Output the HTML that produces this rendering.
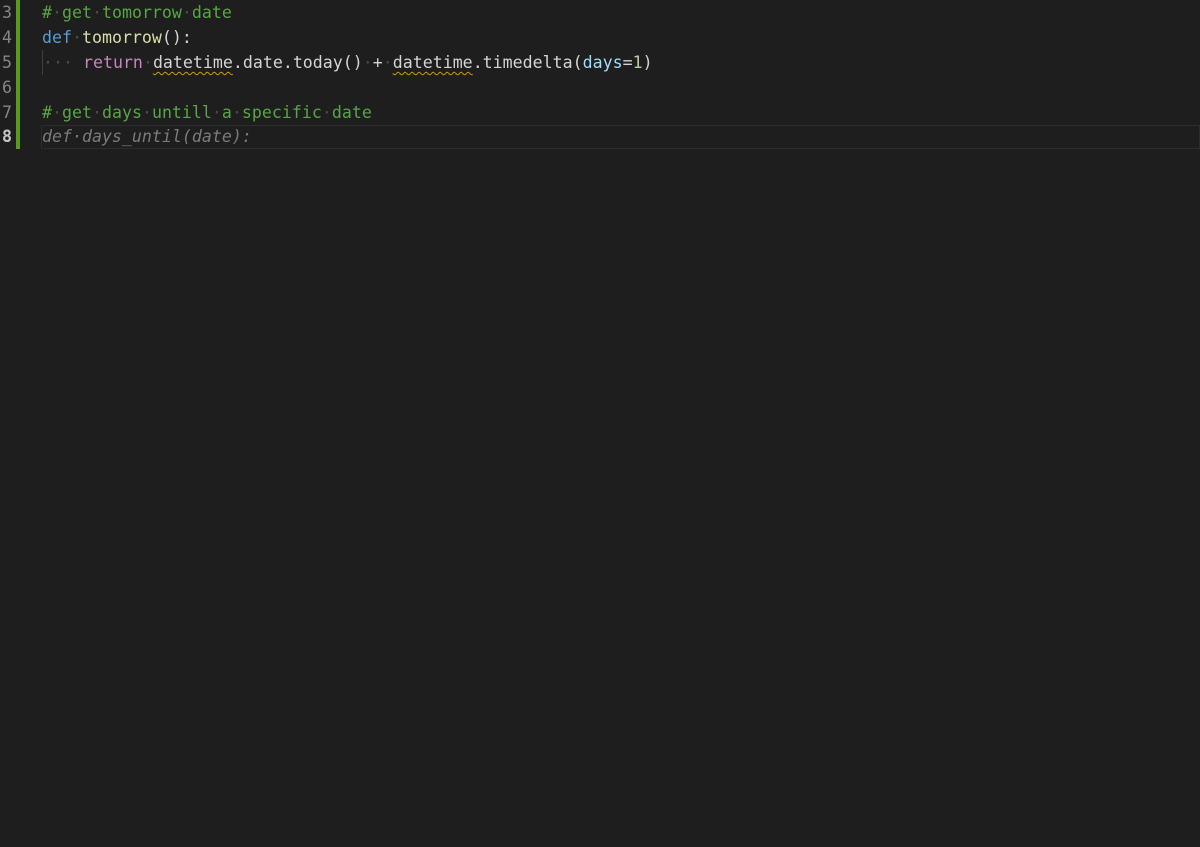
<!DOCTYPE html>
<html><head><style>
html,body{margin:0;padding:0;background:#1e1e1e;width:1200px;height:847px;overflow:hidden}
body{font-family:"DejaVu Sans Mono","Liberation Mono",monospace;font-size:16.6px;position:relative}
.ln{position:absolute;left:0;width:12px;text-align:right;color:#858585;height:25px;line-height:25px}
.code{position:absolute;left:42px;height:25px;line-height:25px;white-space:pre;color:#d4d4d4}
.bar{position:absolute;left:16px;top:0;width:4px;height:149px;background:#5a9a1e}
.c{color:#5aa447}.k{color:#569cd6}.f{color:#dcdcaa}.r{color:#c586c0}.p{color:#9cdcfe}.n{color:#b5cea8}
.d{color:#4a4a4a}
.w{text-decoration:underline wavy #c9a300;text-underline-offset:3px;text-decoration-thickness:1px}
.hl{position:absolute;left:41px;top:125px;width:1159px;height:24px;border:1px solid #2c2c2c;box-sizing:border-box}
</style></head><body>
<div class="bar"></div>
<div class="hl"></div>
<div class="ln" style="top:0">3</div>
<div class="ln" style="top:25px">4</div>
<div class="ln" style="top:50px">5</div>
<div class="ln" style="top:75px">6</div>
<div class="ln" style="top:100px">7</div>
<div class="ln" style="top:124px;color:#c6c6c6;font-weight:bold">8</div>
<div class="code c" style="top:0">#<span class="d">·</span>get<span class="d">·</span>tomorrow<span class="d">·</span>date</div>
<div class="code" style="top:25px"><span class="k">def</span><span class="d">·</span><span class="f">tomorrow</span>():</div>
<div class="code" style="top:50px;border-left:1px solid #404040;left:42px"><span class="d">···</span> <span class="r">return</span><span class="d">·</span><span class="w">datetime</span>.date.today()<span class="d">·</span>+<span class="d">·</span><span class="w">datetime</span>.timedelta(<span class="p">days</span>=<span class="n">1</span>)</div>
<div class="code c" style="top:100px">#<span class="d">·</span>get<span class="d">·</span>days<span class="d">·</span>untill<span class="d">·</span>a<span class="d">·</span>specific<span class="d">·</span>date</div>
<div class="code" style="top:124px;color:#7a7a7a;font-style:italic">def·days_until(date):</div>
</body></html>
